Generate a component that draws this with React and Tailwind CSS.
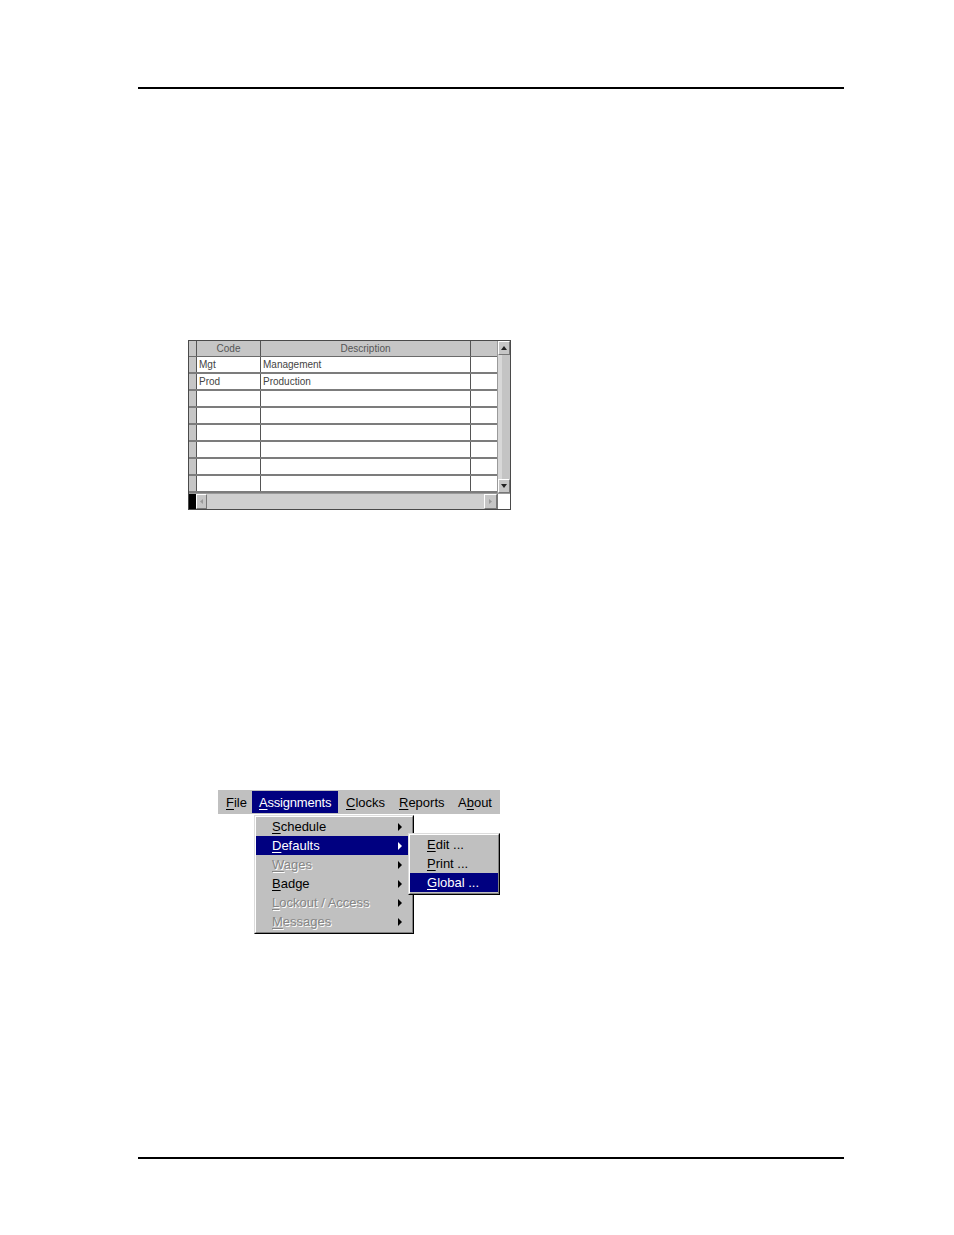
import React from "react";

const U = ({ children }) => <span className="underline underline-offset-[2px] decoration-1">{children}</span>;

const Arrow = ({ color = "#000" }) => (
  <svg width="5" height="8" viewBox="0 0 5 8" className="shrink-0">
    <polygon points="0,0 4,4 0,8" fill={color} />
  </svg>
);

function TableGrid() {
  const rows = [
    ["Mgt", "Management"],
    ["Prod", "Production"],
    ["", ""],
    ["", ""],
    ["", ""],
    ["", ""],
    ["", ""],
    ["", ""],
  ];
  return (
    <div className="w-[323px] border border-[#4a4a4a] flex flex-col bg-white font-['Liberation_Sans',Arial,sans-serif] text-[10px] leading-none text-[#444]">
      <div className="flex">
        <div className="flex flex-col w-[308px]">
          <div className="flex h-[16px] bg-[#c6c6c6] border-b border-[#6a6a6a]">
            <div className="w-[8px] border-r border-[#555]" />
            <div className="w-[64px] border-r border-[#555] flex items-center justify-center text-[#555]">Code</div>
            <div className="w-[210px] border-r border-[#555] flex items-center justify-center text-[#555]">Description</div>
            <div className="w-[26px]" />
          </div>
          {rows.map((r, i) => (
            <div key={i} className="flex h-[17px] border-b-2 border-[#7c7c7c]">
              <div className="w-[8px] bg-[#c6c6c6] border-r border-[#555]" />
              <div className="w-[64px] border-r border-[#555] flex items-center pl-[2px] pt-[1px]">{r[0]}</div>
              <div className="w-[210px] border-r border-[#555] flex items-center pl-[2px] pt-[1px]">{r[1]}</div>
              <div className="w-[26px]" />
            </div>
          ))}
        </div>
        <div className="w-[13px] flex flex-col bg-[#cdcdcd] border-l border-[#9a9a9a]">
          <div className="h-[14px] bg-[#c6c6c6] border-t border-l border-white border-r border-b border-r-[#777] border-b-[#777] flex items-center justify-center">
            <svg width="6" height="4" viewBox="0 0 6 4"><polygon points="0,4 3,0 6,4" fill="#222" /></svg>
          </div>
          <div className="flex-1 flex">
            <div className="w-[4px] bg-[#d8d8d8]" />
            <div className="flex-1 bg-[#c4c4c4]" />
          </div>
          <div className="h-[14px] bg-[#c6c6c6] border-t border-l border-white border-r border-b border-r-[#777] border-b-[#777] flex items-center justify-center">
            <svg width="6" height="4" viewBox="0 0 6 4"><polygon points="0,0 6,0 3,4" fill="#222" /></svg>
          </div>
        </div>
      </div>
      <div className="flex h-[16px] border-t border-[#9a9a9a]">
        <div className="w-[7px] bg-black" />
        <div className="w-[11px] bg-[#c6c6c6] border-t border-l border-white border-r border-b border-r-[#777] border-b-[#777] flex items-center justify-center">
          <svg width="3" height="5" viewBox="0 0 3 5"><polygon points="3,0 0,2.5 3,5" fill="#999" /></svg>
        </div>
        <div className="flex-1 bg-[#cfcfcf]" />
        <div className="w-[13px] bg-[#c6c6c6] border-t border-l border-white border-r border-b border-r-[#777] border-b-[#777] flex items-center justify-center">
          <svg width="3" height="5" viewBox="0 0 3 5"><polygon points="0,0 3,2.5 0,5" fill="#999" /></svg>
        </div>
        <div className="w-[13px] bg-white border-l border-[#777]" />
      </div>
    </div>
  );
}

function MenuItem({ mn, rest, pre = "", highlighted, disabled, arrow }) {
  const base = "h-[19px] flex items-center justify-between pl-[16px] pr-[9px]";
  const cls = highlighted
    ? base + " bg-[#000080] text-white"
    : disabled
    ? base + " text-[#868686] [text-shadow:1px_1px_0_#ffffff]"
    : base + " text-black";
  return (
    <div className={cls}>
      <span className="whitespace-pre">
        {pre}
        <U>{mn}</U>
        {rest}
      </span>
      {arrow && <Arrow color={highlighted ? "#ffffff" : "#000"} />}
    </div>
  );
}

function Menu() {
  return (
    <div className="relative w-[282px] h-[24px] bg-[#c0c0c0] flex items-center text-[13px] leading-none font-['Liberation_Sans',Arial,sans-serif] text-black">
      <div className="w-[34px] h-[22px] flex items-center pl-[8px]">
        <U>F</U>ile
      </div>
      <div className="w-[86px] h-[22px] flex items-center pl-[7px] bg-[#000080] text-white tracking-[-0.2px]">
        <U>A</U>ssignments
      </div>
      <div className="w-[52px] h-[22px] flex items-center pl-[8px]">
        <U>C</U>locks
      </div>
      <div className="w-[60px] h-[22px] flex items-center pl-[9px]">
        <U>R</U>eports
      </div>
      <div className="w-[50px] h-[22px] flex items-center pl-[8px]">
        A<U>b</U>out
      </div>

      <div className="absolute left-[36px] top-[25px] w-[160px] border-t border-l border-[#dcdcdc] border-r border-b border-r-black border-b-black z-10">
        <div className="bg-[#c0c0c0] border-t border-l border-white border-r border-b border-r-[#808080] border-b-[#808080] pb-[1px]">
          <MenuItem mn="S" rest="chedule" arrow />
          <MenuItem mn="D" rest="efaults" arrow highlighted />
          <MenuItem mn="W" rest="ages" arrow disabled />
          <MenuItem mn="B" rest="adge" arrow />
          <MenuItem mn="L" rest="ockout / Access" arrow disabled />
          <MenuItem mn="M" rest="essages" arrow disabled />
        </div>
      </div>

      <div className="absolute left-[190px] top-[43px] w-[92px] border-t border-l border-[#dcdcdc] border-r border-b border-r-black border-b-black z-20">
        <div className="bg-[#c0c0c0] border-t border-l border-white border-r border-b border-r-[#808080] border-b-[#808080] pb-[1px]">
          <div className="h-[19px] flex items-center pl-[17px]"><U>E</U>dit ...</div>
          <div className="h-[19px] flex items-center pl-[17px]"><U>P</U>rint ...</div>
          <div className="h-[19px] flex items-center pl-[17px] bg-[#000080] text-white"><U>G</U>lobal ...</div>
        </div>
      </div>
    </div>
  );
}

export default function App() {
  return (
    <div className="w-[954px] h-[1235px] bg-white flex flex-col">
      <div className="ml-[138px] mt-[87px] w-[706px] h-[2px] bg-black" />
      <div className="ml-[188px] mt-[251px]">
        <TableGrid />
      </div>
      <div className="ml-[218px] mt-[280px]">
        <Menu />
      </div>
      <div className="ml-[138px] mt-[343px] w-[706px] h-[2px] bg-black" />
    </div>
  );
}
